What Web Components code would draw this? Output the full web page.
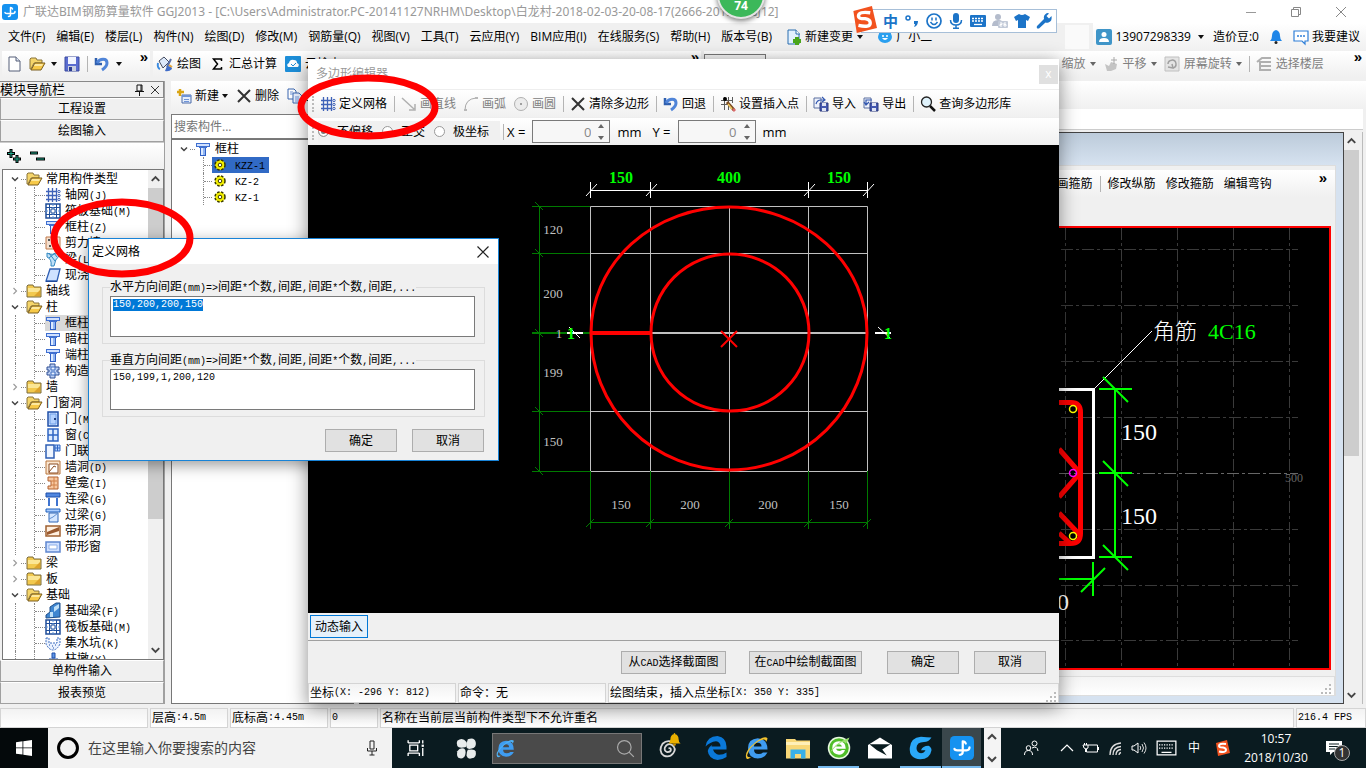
<!DOCTYPE html>
<html lang="zh-CN">
<head>
<meta charset="utf-8">
<title>广联达BIM钢筋算量软件 GGJ2013</title>
<style>
html,body{margin:0;height:100%}
body{position:relative;overflow:hidden;font:12px/16px "Open Sans","Noto Sans CJK SC",sans-serif;color:#000;background:#f0f0f0;display:flex;flex-direction:column}
main-window{flex:1;min-height:0}
</style>
</head>
<body>
<main-window></main-window>
<task-bar></task-bar>
<polygon-editor></polygon-editor>
<grid-dialog></grid-dialog>
<ime-bar></ime-bar>
<speed-ball>74</speed-ball>
<red-marks></red-marks>
<script>
const BASE = `*,:host{box-sizing:border-box}
button{font:inherit;color:inherit;background:none;border:0;padding:0;margin:0}
input,textarea,select{font:inherit;margin:0;border-radius:0;outline:0}
a{color:inherit;text-decoration:none}
.a{font-family:"Liberation Mono",monospace;font-size:10px;line-height:10px}
ui-icon{flex:none}
.sep{width:1px;height:16px;background:#b4b4b4;margin-right:-1px;flex:none}
.caret{width:0;height:0;border:3px solid transparent;border-top:4px solid #111;border-bottom:0;flex:none}
.more{font:bold 15px/10px "Liberation Sans",sans-serif}`;
/* wraps half-width runs so that they keep a 6px advance beside 12px ideographs */
const M = s => s.replace(/[\x20-\x7e]+/g, m => `<span class="a">${m.replace(/>/g,'&gt;').replace(/  +/g,x=>'&nbsp;'.repeat(x.length))}</span>`);
function define(name, css, html, setup){
  customElements.define(name, class extends HTMLElement{
    constructor(){
      super();
      const t = document.createElement('template');
      t.innerHTML = `<style>${BASE}${css}</style>` + (typeof html === 'function' ? '' : html);
      this.attachShadow({mode:'open'}).append(t.content.cloneNode(true));
    }
    connectedCallback(){
      if(this.ready) return;
      this.ready = true;
      if(typeof html === 'function'){
        const t = document.createElement('template');
        t.innerHTML = html(this);
        this.shadowRoot.append(t.content.cloneNode(true));
      }
      if(setup) setup(this);
    }
  });
}

const COLUMN = `<path d="M1 2h14v4h-3v1H4V6H1z" fill="#3f6fd0"/><path d="M2 3h12v2H2z" fill="#cfe0ff"/><path d="M5 7h6v8H5z" fill="#2f5fc4"/><path d="M6 7h2v7H6z" fill="#dceaff"/><path d="M8 7h2v7H8z" fill="#8fb4f2"/>`;
const RAFT = `<path d="M1 1h14v14H1z" fill="#fff" stroke="#1f4e9a" stroke-width="1.500"/><path d="M4.500 1v14M11.500 1v14M1 4.500h14M1 11.500h14" stroke="#1f4e9a"/><path d="M8 1v14M1 8h14" stroke="#5f93d8" stroke-dasharray="2 1"/><path d="M6 6h4v4H6z" fill="#fff" stroke="#1f4e9a"/>`;
const GRID = `<path d="M3.500 1v14M7.500 1v14M11.500 1v14M1 4.500h11M1 8.500h11M1 12.500h11" stroke="#3f62b8" stroke-width="1.300"/><circle cx="14" cy="4.500" r="1.200" fill="none" stroke="#3f62b8"/><circle cx="14" cy="8.500" r="1.200" fill="none" stroke="#3f62b8"/><circle cx="14" cy="12.500" r="1.200" fill="none" stroke="#3f62b8"/>`;
const FOLDER = `<path d="M1 3l1-1h5l1 2h7v10H1z" fill="#f2c94e" stroke="#7a6a3a"/><path d="M2 5h12v4H2z" fill="#fbe694"/><path d="M2 13h12V7L8 13z" fill="#dca22c"/>`;
const OPEN = `<path d="M1 3l1-1h5l1 2h5v3H5L2 13H1z" fill="#f5d56a" stroke="#8a743a"/><path d="M2 14l4-7h10l-4 7z" fill="#f7c948" stroke="#7a5f20"/><path d="M6 8h8l-1 2H5z" fill="#fde9a0"/>`;
const SAVE = `<path d="M1 1h14v14H1z" fill="#5a6cd0" stroke="#3a4a9f"/><path d="M4 1h8v7H4z" fill="#f2f5ff"/><path d="M4 10h8v5H4z" fill="#c9cfdf"/><path d="M5 11h3v4H5z" fill="#2b3c90"/>`;
const UNDO = `<path d="M2 2v6h6" fill="none" stroke="#2f5fae" stroke-width="2.500"/><path d="M3 7c3-5 10-5 10 0 0 3-2 5-5 7" fill="none" stroke="#4f84d8" stroke-width="3"/>`;
const CROSS = `<path d="M2 2l12 12M14 2L2 14" stroke="#333" stroke-width="2"/>`;
const TILE = `<rect width="16" height="16" rx="3" fill="#1592f0"/><path d="M8.500 3.500v7q0 2-2 2M3 8.500q0 1 2 1h6q2 0 2-2M10.500 5q-.500-1.500-2-1.500" fill="none" stroke="#fff" stroke-width="1.500" stroke-linecap="round"/>`;
const SOGOU = `<path d="M2 3l11-3 3 13-12 3z" fill="#f2521e"/><path d="M12 4Q5 3 5 6q0 1.500 4 1.500 3 .500 3 2.500 0 3-7 1.500" fill="none" stroke="#fff" stroke-width="2"/>`;
const DISK = `<path d="M1 2h7v10H1z" fill="#eef2fb" stroke="#5b6f9f"/><path d="M7 7h8v8H7z" fill="#4458b0" stroke="#2a397c"/><path d="M9 7h4v3H9zM9 12h4v3H9z" fill="#dfe4f3"/>`;
const ICONS = {
 column:COLUMN, raft:RAFT, grid:GRID, folder:FOLDER, open:OPEN, save:SAVE, undo:UNDO, cross:CROSS, app:TILE, sogou:SOGOU,
 page:`<path d="M3 1h7l4 4v10H3z" fill="#fff" stroke="#555f78"/><path d="M10 1v4h4" fill="#dfe6f2" stroke="#555f78"/>`,
 paint:`<path d="M2 5l5-4 5 5-6 6z" fill="#dce8fa" stroke="#444b60"/><path d="M1 7q-1 5 2 6" stroke="#3b8be0" stroke-width="2" fill="none"/><path d="M14 3l-4 8" stroke="#5a6fa8" stroke-width="2"/><path d="M10 10q5 0 5 3-3 3-7 2z" fill="#3f6cc8"/><path d="M12 9l3 2" stroke="#e8a83a" stroke-width="2"/>`,
 sum:`<path d="M12.500 5V3H4.500l4 5-4 5h8v-2" fill="none" stroke="#000" stroke-width="1.500"/>`,
 cloud:`<rect width="16" height="16" rx="1" fill="#1d8ed8"/><path d="M3 11q-2-3 1-4 1-4 5-3 3 0 3 3 3 1 1 4z" fill="#fff"/><path d="M6 8l2 2 3-3" fill="none" stroke="#1d8ed8"/>`,
 newitem:`<path d="M4 1v7M1 4h7" stroke="#d9a514" stroke-width="2.500"/><path d="M6 7h9v8H6z" fill="#e5eefc" stroke="#4b6aa8"/><path d="M6 7h9v2H6z" fill="#6f94d8"/><path d="M8 11.500h5M8 13.500h5" stroke="#6f94d8"/>`,
 copy:`<path d="M1 1h6l2 2v8H1z" fill="#fff" stroke="#3a66b0"/><path d="M6 5h6l3 3v7H6z" fill="#e8f0ff" stroke="#3a66b0"/><path d="M8 9h4M8 11h5M8 13h5M3 4h3M3 6h3" stroke="#6f94d8"/>`,
 change:`<path d="M2 1h8l3 3v11H2z" fill="#e2f1ff" stroke="#2a6fb0"/><path d="M10 1v4h4" fill="#fff" stroke="#2a6fb0"/><path d="M11 8v8M7 12h8" stroke="#4aa61c" stroke-width="4"/>`,
 bear:`<circle cx="4" cy="4" r="2" fill="#1f94e8"/><circle cx="12" cy="4" r="2" fill="#1f94e8"/><ellipse cx="8" cy="8" rx="7" ry="6" fill="#2aa0f0"/><circle cx="6" cy="7" r="1" fill="#fff"/><circle cx="10" cy="7" r="1" fill="#fff"/><path d="M5 9q3 4 6 0z" fill="#fff"/>`,
 user:`<rect width="16" height="16" rx="2" fill="#3f95c8"/><circle cx="8" cy="5.500" r="2.500" fill="#fff"/><path d="M3 13q0-4 5-4t5 4z" fill="#fff"/>`,
 bell:`<path d="M8 1q4 1 4 6 0 3 2 5H2q2-2 2-5 0-5 4-6z" fill="#1f86e8"/><circle cx="8" cy="13.500" r="1.500" fill="#222"/>`,
 chat:`<path d="M1 2h14v10h-3v3l-3-3H1z" fill="#fff" stroke="#2f7fd8" stroke-width="1.200"/><path d="M4 7h2M7 7h2M10 7h2" stroke="#2f7fd8" stroke-width="1.500"/>`,
 hand:`<path d="M2 8l4 2 2-4 6 2-1 5-5 2H4z" fill="#c4c4c4"/><path d="M11 1v7M8 4h6" stroke="#a8a8a8"/>`,
 rotate:`<path d="M1 1h14v14H1z" fill="#e4e4e4" stroke="#c0c0c0"/><path d="M4 8a4 4 0 1 1 5 4M4 11l5 1-1-4" fill="none" stroke="#a0a0a0" stroke-width="1.500"/>`,
 floors:`<path d="M1 6l5-4h9M3 6h12M4 10h11M4 14h11M4 6v9" fill="none" stroke="#b0b0b0" stroke-width="2"/>`,
 line:`<path d="M1 2l12 11M14 8v6H8" fill="none" stroke="#b0b0b0" stroke-width="1.500"/>`,
 arc:`<path d="M2 14Q2 3 13 2" fill="none" stroke="#a8a8a8"/><path d="M1 13h3v2H1zM12 1h3v2h-3z" fill="#b8b8b8"/>`,
 circle:`<circle cx="8" cy="8" r="6.500" fill="#ececec" stroke="#b0b0b0"/><path d="M7 7h2v2H7z" fill="#a0a0a0"/>`,
 insert:`<path d="M4.500 1v13M8.500 1v13M1 4.500h12M1 8.500h8M12.500 1v6" stroke="#5c5c5c"/><circle cx="5" cy="3" r="2" fill="#000"/><path d="M7 6l7 8" stroke="#7a4a20" stroke-width="3"/><path d="M8 8l4 5" stroke="#f0c860" stroke-width="1.500"/><path d="M13 13l2 2" stroke="#d86a6a" stroke-width="3"/>`,
 imp:DISK+`<path d="M3 8q1-4 5-4h3M9 1l3 3-3 2" fill="none" stroke="#3358b0" stroke-width="1.200"/>`,
 exp:DISK+`<path d="M9 4H3v5M1 6l2 3 3-3" fill="none" stroke="#3358b0" stroke-width="1.200"/>`,
 find:`<circle cx="6.500" cy="6" r="5" fill="#dff2fb" stroke="#222" stroke-width="1.300"/><path d="M10 10l5 5" stroke="#111" stroke-width="2.500"/>`,
 wall:`<path d="M1 2h14v12H1z" fill="#f4e0d0" stroke="#c07848"/><path d="M3 4h2v2H3zM7 8h2v2H7zM4 10h2v2H4zM10 4h2v2h-2z" fill="#555"/>`,
 beam:`<path d="M2 2q5 3 12-1v4q-4 3-5 10H6Q7 8 2 6z" fill="#bfe0f8" stroke="#2f86c0"/><path d="M4 2l6 8M9 2l3 4M4 7l6-5" stroke="#2f86c0"/>`,
 slab:`<path d="M5 2h10l-3 12H1z" fill="#cfe2ff" stroke="#2f5fb4" stroke-width="1.300"/><path d="M1 14h11v1H1z" fill="#1f4a9a"/>`,
 cols:`<path d="M5 1h5v3h4v3h-2v2h2v3h-4v3H5v-3H2V9h2V7H2V4h3z" fill="#bcd0f4" stroke="#2f4f94"/><path d="M6 4h4v3H6zM6 9h4v3H6z" fill="#eaf1ff" stroke="#3f6fc0"/>`,
 door:`<path d="M3 1h10v14H3z" fill="#cfe2ff" stroke="#1f4fa8" stroke-width="1.500"/><path d="M5 3h6v10H5z" fill="#b4d2ff" stroke="#6f9fe8"/><path d="M9 7h2v2H9z" fill="#1f3f80"/>`,
 window:`<path d="M3 2h10v12H3z" fill="#dcebff" stroke="#2f66c4" stroke-width="1.500"/><path d="M8 2v12M3 8h10" stroke="#2f66c4" stroke-width="1.500"/>`,
 doorwin:`<path d="M1 2h8v13H1z" fill="#eef5ff" stroke="#2f5fb4" stroke-width="1.500"/><path d="M10 2h5v6h-5zM12.500 2v6M10 5h5" fill="#b8d4ff" stroke="#2f66c4"/>`,
 hole:`<path d="M1 2h14v13H1z" fill="#fbe6d0" stroke="#b8743a"/><path d="M4 5h9v9H4z" fill="#fff" stroke="#8a4a20"/><path d="M4 13l5-6 2 1" stroke="#8a4a20" fill="none"/>`,
 niche:`<path d="M3 2h10v12H3v-3h3V6H3z" fill="#f8c8a0" stroke="#b06030"/><path d="M6 6h6M6 10h6M9 2v12" stroke="#d08048"/>`,
 lintel:`<path d="M1 2h14v4H1z" fill="#4f86e0" stroke="#1f4fa8"/><path d="M3 7h2v8H3zM11 7h2v8h-2z" fill="#3f74d0"/>`,
 ring:`<path d="M1 2h14v3H1z" fill="#a8ccff" stroke="#1f5fb8"/><path d="M4 6h9v9H4z" fill="#d4e6ff" stroke="#2f66b8"/><path d="M4 12l4-2 5-4" stroke="#5f8fd0" fill="none"/>`,
 strip:`<path d="M1 3h14v10H1z" fill="#fff0e0" stroke="#a06030" stroke-width="1.500"/><path d="M2 9l12-5v4L2 12z" fill="#9a5a30"/>`,
 stripw:`<path d="M1 3h14v10H1z" fill="#cfe0ff" stroke="#5f86d0" stroke-width="1.500"/><path d="M4 6h8v4H4z" fill="#fff" stroke="#8fb0e8"/>`,
 fbeam:`<path d="M1 15v-3l4-3V4l6-4h4v14z" fill="#3f86d0" stroke="#1f4f8a"/><path d="M5 9h3v5H5zM9 4l5-3v4L9 9z" fill="#bfe0f8"/>`,
 pit:`<path d="M1 3h3v5h8V3h3v6q-3 6-7 6T1 9z" fill="#eaf2ff" stroke="#3f6fc0" stroke-dasharray="2 1"/><path d="M4 10h1M7 11h1M10 10h1M8 13h1" stroke="#1f4fa8"/>`,
 pier:`<path d="M7 2h3v5H7zM4 8h9v7H4z" fill="#5f96e8" stroke="#1f4fa8"/>`,
 gear:`<circle cx="8" cy="8" r="5" fill="#f4f000" stroke="#3a3a00" stroke-width="1.500" stroke-dasharray="2.500 1.500"/><circle cx="8" cy="8" r="1.800" fill="#fff" stroke="#3a3a00"/>`,
 plus:`<path d="M5 1v9M1 5.500h8M11 7v8M7 11h8" stroke="#000" stroke-width="3"/><path d="M5 2v7M2 5.500h6M11 8v6M8 11h6" stroke="#1fa88a"/>`,
 minus:`<path d="M1 5h8M7 11h9" stroke="#000" stroke-width="3"/><path d="M2 5h6M8 11h7" stroke="#1fa88a"/>`,
 up:`<path d="M4 10l4-4 4 4" fill="none" stroke="#444" stroke-width="2"/>`,
 down:`<path d="M4 6l4 4 4-4" fill="none" stroke="#444" stroke-width="2"/>`,
 right:`<path d="M6 4l4 4-4 4" fill="none" stroke="#999" stroke-width="1.500"/>`,
 pin:`<path d="M6 3h5v6H6zM4 9.500h9M8.500 9v5M10 3v6" fill="none" stroke="#111"/>`,
 xs:`<path d="M4 4l8 8M12 4l-8 8" stroke="#333"/>`,
 xl:`<path d="M2.500 2.500l11 11M13.500 2.500l-11 11" stroke="#222" stroke-width="1.200"/>`,
 min:`<path d="M3 8.500h10" stroke="#999"/>`,
 restore:`<path d="M3.500 5.500h7v7h-7zM5.500 5V3.500h7v7H11" fill="none" stroke="#888"/>`,
 close:`<path d="M3 3l10 10M13 3L3 13" stroke="#888"/>`,
 grip:`<path d="M11 5h2v2h-2zM11 9h2v2h-2zM11 13h2v2h-2zM7 9h2v2H7zM7 13h2v2H7zM3 13h2v2H3z" fill="#bbb"/>`,
 win:`<path d="M0 2.200l6.500-.900V7.500H0zM7.300 1.200L16 0v7.500H7.300zM0 8.300h6.500v6.200L0 13.700zM7.300 8.300H16V16l-8.700-1.200z" fill="#fff"/>`,
 cortana:`<circle cx="8" cy="8" r="6.300" fill="none" stroke="#000" stroke-width="2"/>`,
 mic:`<path d="M6 1h4v8H6zM3.500 8v3h9V8M8 11v4M5.500 15h5" fill="none" stroke="#222"/>`,
 task:`<path d="M1 3.500h10M1 12.500h10M2.500 5.500h7v5h-7zM1 1v2.500M11 1v2.500M1 15v-2.500M11 15v-2.500M14 1v3M14 8v7" fill="none" stroke="#fff" stroke-width="1.200"/><path d="M13 5h2v2h-2z" fill="#fff"/>`,
 swirl:`<g fill="#e8ecec"><path d="M1 2q4-3 7 1 1 3-1 4-5 1-6-1t0-4z"/><path d="M9 1q5-2 6 2 1 4-3 5-3 1-4-1 0-4 1-6z"/><path d="M1 10q2-3 5-2 2 1 1 5-1 3-4 2.500T1 10z"/><path d="M9 9q5-1 6 1 1 5-3 5.500-3 1-4-2 0-3 1-4.500z"/></g>`,
 edge:`<path d="M1 7q1-7 8-7 6 1 6 7v2H6q1 3 4 3.500 3 0 5-1.500v3q-3 2-6 2-6-1-6.500-6 .500-3 4-4.500Q5 6 5 7h6q0-3-3-3.500Q4 4 1 7z" fill="#0a78d8"/>`,
 ie:`<path d="M2 8q0-6 6.500-6.500Q15 2 15 9H6q0 3 3 3 2 0 3-1h3q-2 4-6.500 4Q2 14.500 2 8zm4-1h5q0-2.500-2.500-2.500T6 7z" fill="#3f9cf0"/><path d="M1 15q-2-4 5-10Q13-1 15 1.500q0 1-1 2.500 0-3-5-.500-6 4-7.500 9-.500 2 2.500 1.500-2 2-3 1z" fill="#f2c230"/>`,
 ieb:`<path d="M2 8q0-6 6.500-6.500Q15 2 15 9H6q0 3 3 3 2 0 3-1h3q-2 4-6.500 4Q2 14.500 2 8zm4-1h5q0-2.500-2.500-2.500T6 7z" fill="#3f9cf0"/><path d="M1 15q-2-4 5-10Q13-1 15 1.500q0 1-1 2.500 0-3-5-.500-6 4-7.500 9-.500 2 2.500 1.500-2 2-3 1z" fill="#4fb4f8"/>`,
 ieg:`<circle cx="8" cy="8" r="7.500" fill="#e8f8e0"/><circle cx="8" cy="8" r="6.500" fill="#4fbe28"/><path d="M3.500 8q0-4.500 4.500-4.500t4.500 5h-6.500q.500 1.500 2.200 1.500 1 0 1.800-.700H12Q11 12.500 8 12.500 3.500 12 3.500 8zM6 7h4q-.500-1.500-2-1.500T6 7z" fill="#fff"/><path d="M1 13Q4 5 15 1q-1 3-3 4 0-2-3-.500Q4 8 1 13z" fill="#9be070"/>`,
 explorer:`<path d="M0 2h6l1 1h9v12H0z" fill="#f8d878"/><path d="M0 4h16v2H0z" fill="#fff0b8"/><path d="M3 9h10v6h-3v-3H6v3H3z" fill="#38b0e8"/>`,
 mail:`<path d="M0 6l8-5 8 5v9H0z" fill="#fff"/><path d="M1 5.500h14L9.500 9l3 4L6 9.500z" fill="#0a1c20"/>`,
 g:`<path d="M15 1Q13 4 10 4 5 4 5 8q0 3 3 3.500 2 0 3-2H8q1-3 5-3 2 1 2 3-1 6-7.500 6Q0 15 .500 8 1 1 8 .500q4 .500 7 .500z" fill="#2aa8f8"/>`,
 spiral:`<path d="M8 8q2-1 2 1t-3 2Q4 10 5 7q2-4 6-2 4 3 1 7-3 4-8 2-5-4-1-10 3-3 7-2" fill="none" stroke="#d8d8d8" stroke-width="1.500"/>`,
 alarm:`<path d="M8 0q1 0 1 1.500 4 1 4 6 0 4 2.500 5.500H.500Q3 11.500 3 7.500q0-5 4-6Q7 0 8 0z" fill="#eab000"/><path d="M6 13h4q0 3-2 3t-2-3z" fill="#c89000"/>`,
 search:`<circle cx="7" cy="7" r="5.700" fill="none" stroke="#aaa"/><path d="M11 11l4 4" stroke="#aaa"/>`,
 people:`<circle cx="11.500" cy="3.500" r="2.500" fill="none" stroke="#fff"/><circle cx="5.500" cy="8" r="2.300" fill="none" stroke="#fff"/><path d="M1.500 15q0-4.500 4-4.500t4 4.500M9 8q5.500-2.500 6 3" fill="none" stroke="#fff"/>`,
 upw:`<path d="M2 11l6-6 6 6" fill="none" stroke="#fff" stroke-width="1.200"/>`,
 battery:`<path d="M5 5h9.500v7H3.500V9M15.500 7v3" fill="none" stroke="#fff"/><path d="M0 5h5v3q-2 2-4 0zM1.500 3v2M3.500 3v2M2.500 9v3" stroke="#fff" fill="none"/>`,
 wifi:`<path d="M3 15Q3 4 14 3M6 15Q6 7 14 6.500M9 15q0-5 5-5.500M12 15q0-2 2-2.500" fill="none" stroke="#ddd" stroke-width="1.300"/>`,
 speaker:`<path d="M1 6h2l4-3v10L3 10H1z" fill="none" stroke="#fff"/><path d="M9 6q1.500 2 0 4M11 4q3 4 0 8M13 2.500q4 5.500 0 11" fill="none" stroke="#ddd"/>`,
 osk:`<path d="M.500 2.500h15v11H.500z" fill="none" stroke="#fff"/><path d="M2 5.500h12M2 8h12" stroke="#fff" stroke-dasharray="1 1"/><path d="M4 11.500h8" stroke="#fff"/>`,
 notes:`<path d="M0 1h16v11H7l-3 3v-3H0z" fill="#fff"/><path d="M3 4h10M3 6.500h10M3 9h6" stroke="#0a1c20"/>`,
 comma:`<circle cx="4" cy="5" r="2" fill="none" stroke="#1c74c8" stroke-width="1.500"/><path d="M10 8h4q0 5-4 6 1-2 1-3h-1z" fill="#1c74c8"/>`,
 smile:`<circle cx="8" cy="8" r="7" fill="none" stroke="#1c74c8" stroke-width="1.700"/><path d="M6 4.500v3M10 4.500v3M4.500 9q3.500 5 7 0" fill="none" stroke="#1c74c8" stroke-width="1.500"/>`,
 micb:`<rect x="5" y="0" width="6" height="10" rx="3" fill="#1c74c8"/><path d="M2.500 7q0 5 5.500 5t5.500-5M8 12v3M5 15.200h6" fill="none" stroke="#1c74c8" stroke-width="1.500"/>`,
 kb:`<rect y="2" width="16" height="12" rx="1" fill="#1c74c8"/><path d="M2 5.500h12M2 8h12" stroke="#fff" stroke-width="1.300" stroke-dasharray="2 1"/><path d="M4 11.500h8" stroke="#fff" stroke-width="1.300"/>`,
 person:`<circle cx="6" cy="4" r="3" fill="#b4bccc"/><path d="M0 13q0-6 6-6 3 0 4 1v5z" fill="#b4bccc"/><rect x="6" y="8" width="10" height="7" rx="1" fill="#c2cad8"/><path d="M8 10h2v1.500H8V13h2M14 10h-2v3h2v-1.500h-2" fill="none" stroke="#fff"/>`,
 shirt:`<path d="M5 1q3 2 6 0l5 3-2 4-2-1v8H4V7L2 8 0 4z" fill="#1c74c8"/>`,
 wrench:`<path d="M1 13l7-7q-1-4 3-6 2 0 2 .500L10.500 3 13 5.500 15.500 3q1 5-3 6.500-2 .500-3 0L3 15.500q-3 .500-2-2.500z" fill="#1c74c8"/>`
};
define('ui-icon', `:host{display:block;width:16px;height:16px}svg{display:block;width:100%;height:100%;overflow:visible}`,
  e => `<svg viewBox="0 0 16 16" aria-hidden="true">${ICONS[e.getAttribute('name')]||''}</svg>`);
define('tool-item', `:host{display:block;flex:none}button{display:flex;align-items:center;gap:var(--icon-gap,3px);white-space:nowrap;height:20px}:host([disabled]) button{color:#808080}:host([disabled]) .caret{border-top-color:#666}.caret{margin-left:var(--caret-gap,0)}`,
  e => `<button ${e.hasAttribute('disabled')?'disabled':''}>${e.hasAttribute('icon')?`<ui-icon name="${e.getAttribute('icon')}"></ui-icon>`:''}<slot></slot>${e.hasAttribute('caret')?'<span class="caret"></span>':''}</button>`);
define('push-button', `:host{display:block;flex:none}button{width:100%;height:23px;border:1px solid #adadad;background:#e1e1e1;white-space:nowrap}:host([hot]) button{border-color:#0078d7;background:#e5f1fb}`, `<button><slot></slot></button>`);
define('status-cell', `:host{display:flex;align-items:center;border:1px solid #d4d4d4;background:linear-gradient(#f2f2f2,#fff);height:20px;padding:0 1px;white-space:nowrap;overflow:hidden;flex:none}`, `<slot></slot>`);
define('scroll-bar', `:host{display:flex;flex-direction:column;background:#f0f0f0;width:15px;flex:none}.t{flex:1;display:flex;flex-direction:column}.h{background:#cdcdcd;height:var(--thumb,60%)}ui-icon{width:15px;height:18px}`,
 `<ui-icon name="up"></ui-icon><div class="t"><div class="h"></div></div><ui-icon name="down"></ui-icon>`);

define('tree-row', `:host{display:flex;align-items:center;height:16px;flex:none;white-space:nowrap}
.c{width:12px;height:16px;margin-left:6px}.d{width:5px;border-top:1px dotted #888}
.v{width:19px;height:16px;border-left:1px dotted #888;margin-left:12px}
.h{width:11px;height:16px;border-left:1px dotted #888;display:flex;align-items:center}.h i{flex:1;border-top:1px dotted #888}
.l{margin-left:4px;padding-right:6px}
:host([sel]) .l,:host([sel]) .i{background:#d9d9d9}:host([sel]) .l{margin-left:0;padding-left:4px;flex:1}
:host([short]) .v{border:0;margin-left:0;width:31px}:host([short]) .h{width:9px}
:host([short]) .l{margin-left:0;padding:0 4px 0 7px}:host([active]) .l,:host([active]) .i{background:#316ac5}`,
 e => { const ic = `<ui-icon class="i" name="${e.getAttribute('icon')}"></ui-icon><span class="l"><slot></slot></span>`;
  return e.hasAttribute('root') ? `<ui-icon class="c" name="${e.getAttribute('root')==='open'?'down':'right'}"></ui-icon><span class="d"></span>${ic}`
   : `<span class="v"></span><span class="h"><i></i></span>${ic}`; });
const TREE = [['o','常用构件类型'],['grid','轴网(J)'],['raft','筏板基础(M)'],['column','框柱(Z)'],['wall','剪力墙(Q)'],['beam','梁(L)'],['slab','现浇板(B)'],['c','轴线'],['o','柱'],['column','框柱(Z)','sel'],['column','暗柱(Z)'],['column','端柱(Z)'],['cols','构造柱(Z)'],['c','墙'],['o','门窗洞'],['door','门(M)'],['window','窗(C)'],['doorwin','门联窗(A)'],['hole','墙洞(D)'],['niche','壁龛(I)'],['lintel','连梁(G)'],['ring','过梁(G)'],['strip','带形洞'],['stripw','带形窗'],['c','梁'],['c','板'],['o','基础'],['fbeam','基础梁(F)'],['raft','筏板基础(M)'],['pit','集水坑(K)'],['pier','柱墩(Y)']];
const row = ([k,t,s='']) => k==='o'||k==='c' ? `<tree-row root="${k==='o'?'open':'shut'}" icon="${k==='o'?'open':'folder'}">${M(t)}</tree-row>` : `<tree-row icon="${k}" ${s}>${M(t)}</tree-row>`;

define('nav-pane', `:host{display:flex;flex-direction:column;border-right:1px solid #a0a0a0;min-height:0}
header{height:17px;display:flex;align-items:center;border:1px solid #888;border-left:0;flex:none;overflow:hidden}header b{font-weight:400;font-size:13px;line-height:13px;flex:1;white-space:nowrap}
.big{height:22px;flex:none;background:#f0f0f0;border:1px solid #a0a0a0;border-top-color:#fff}
.tools{height:27px;display:flex;align-items:center;gap:7px;padding-left:6px;background:linear-gradient(#fff,#f0f0f0);flex:none;border-top:1px solid #ccc}
.box{flex:1;min-height:0;display:flex;background:#fff;border:1px solid #777;margin-left:2px;overflow:hidden}
.tree{flex:1;min-width:0;overflow:hidden;display:flex;flex-direction:column;padding-top:1px}`,
`<header><b>模块导航栏</b><ui-icon name="pin"></ui-icon><ui-icon name="xs"></ui-icon></header>
<button class="big">工程设置</button><button class="big">绘图输入</button>
<div class="tools"><ui-icon name="plus"></ui-icon><ui-icon name="minus"></ui-icon></div>
<div class="box"><div class="tree">${TREE.map(row).join('')}</div><scroll-bar style="--thumb:73%"></scroll-bar></div>
<button class="big">单构件输入</button><button class="big">报表预览</button>`);

define('part-list', `:host{display:flex;flex-direction:column;min-height:0;padding-left:1px}
.bar{display:flex;align-items:center;gap:8px;height:30px;padding-left:5px;background:linear-gradient(#fff,#f0f0f0);flex:none}
input{height:25px;width:100%;border:1px solid #7a7a7a;background:#fff;padding:0 2px;flex:none;margin:3px 0 0}input::placeholder{color:#757575}
.tree{flex:1;background:#fff;border:1px solid #777;padding-top:1px}`,
`<div class="bar"><tool-item icon="newitem" caret>新建</tool-item><tool-item icon="cross">删除</tool-item><tool-item icon="copy">复制</tool-item></div>
<input type="text" placeholder="搜索构件..." aria-label="搜索构件">
<div class="tree"><tree-row root="open" icon="column">${M('框柱')}</tree-row><tree-row short active icon="gear">${M('KZZ-1')}</tree-row><tree-row short icon="gear">${M('KZ-2')}</tree-row><tree-row short icon="gear">${M('KZ-1')}</tree-row></div>`);

const tick = (x,y) => `<path d="M${x-16} ${y}h33M${x-12} ${y-12}l25 25"/>`;
define('section-view', `:host{display:flex;justify-content:flex-end;background:#000;border:2px solid #f00;overflow:hidden}svg{width:300px;height:438px;flex:none;display:block}text{font-family:"Liberation Serif","Noto Sans CJK SC",serif}`,
`<svg viewBox="1029 228 300 438"><g stroke="#3a3a3a" stroke-dasharray="12 3 3 3">${[1065,1121,1177,1233,1289].map(x=>`<path d="M${x}.500 228V666"/>`).join('')}${[249,305,361,417,529,585,640].map(y=>`<path d="M1061 ${y}.500H1298"/>`).join('')}<path d="M1059 473.500H1298" stroke="#666"/></g>
<path d="M1095 388l57-57" stroke="#fff"/>
<path d="M1040 389.500h53.500v168H1040" fill="none" stroke="#fff" stroke-width="3"/>
<path d="M1040 402.500h31q9.500 0 9.500 10v121q0 10-10 10H1040M1059 449l21 24-21 24M1059 513l21 22M1059 533l12 11" fill="none" stroke="#f00" stroke-width="5"/>
<g fill="none" stroke-width="1.500"><circle cx="1073" cy="409" r="3.500" stroke="#ff0"/><circle cx="1073" cy="473" r="3.500" stroke="#f0f"/><circle cx="1073" cy="536" r="3.500" stroke="#ff0"/></g>
<g stroke="#0f0" stroke-width="2"><path d="M1115 389v168"/>${tick(1115,389)}${tick(1115,473)}${tick(1115,557)}<path d="M1059 579h34M1093 562v34M1081 592l24-24"/></g>
<g fill="#fff" font-size="24"><text x="1153" y="339" font-size="22" font-weight="300">角筋</text><text x="1121" y="440">150</text><text x="1121" y="524">150</text><text x="1057" y="610">0</text></g>
<text x="1208" y="339" font-size="22" fill="#0f0">4C16</text><text x="1285" y="482" font-size="12" fill="#666">500</text></svg>`);

define('mdi-area', `:host{display:flex;flex-direction:column;min-height:0;min-width:0}
.strip{height:28px;background:linear-gradient(#fff,#f0f0f0);flex:none}
.tabs{height:21px;background:#fff;border-bottom:1px solid #ccc;flex:none;margin-right:3px}
.area{flex:1;display:flex;margin:2px 3px 0 0;padding-right:3px;border-right:1px solid #bbb;min-height:0}
.win{flex:1;min-width:0;display:flex;flex-direction:column;border:1px solid #444;background:linear-gradient(#bccbda,#d6e2f0 32px);padding:32px 7px 7px}
.in{flex:1;min-height:0;display:flex;flex-direction:column;background:#f0f0f0;border:1px solid #ddd;border-bottom:0}
.bar{height:27px;margin-top:4px;display:flex;align-items:center;justify-content:flex-end;gap:10px;background:linear-gradient(#fff,#f0f0f0);padding-right:8px;flex:none}.bar .sep{margin:0 -3px}
.more{margin:-12px 0 0 37px}
section-view{flex:1;margin:29px 4px 6px 0;min-height:0}
.st{height:20px;flex:none;display:flex;justify-content:flex-end;align-items:flex-end;border:1px solid #ddd;background:linear-gradient(#f4f4f4,#fff)}`,
`<div class="strip"></div><div class="tabs"></div><div class="area"><div class="win"><div class="in"><div class="bar"><tool-item>画箍筋</tool-item><span class="sep"></span><tool-item>修改纵筋</tool-item><tool-item>修改箍筋</tool-item><tool-item>编辑弯钩</tool-item><span class="more">»</span></div><section-view></section-view><div class="st"><ui-icon name="grip"></ui-icon></div></div></div><scroll-bar style="--thumb:57%"></scroll-bar></div>`);

define('main-window', `:host{display:flex;flex-direction:column}
.title{height:23px;background:#fff;display:flex;align-items:center;padding:0 17px 0 2px;gap:5px;color:#999;flex:none;white-space:nowrap}.title span{flex:1;font-family:"Noto Sans","Noto Sans CJK SC",sans-serif}.title nav{display:flex;gap:29px}
.menu{height:28px;display:flex;align-items:center;flex:none;background:#f0f0f0;white-space:nowrap;--caret-gap:4px}
.menu nav{display:flex;gap:11px;padding-left:8px;flex:1;align-items:center;--caret-gap:1px}.menu nav tool-item{margin-left:3px}
.acct{display:flex;gap:9px;align-items:center;height:28px;padding:0 6px 0 3px;background:linear-gradient(#fff,#f0f0f0)}
.blank{width:24px;height:24px;background:#fafafa;margin-right:4px}
.tools{height:30px;display:flex;gap:3px;flex:none}
.tools>div{display:flex;align-items:center;background:linear-gradient(#fff,#f0f0f0);height:26px}
.one{width:148px;padding-left:4px;gap:7px;margin-left:2px;--caret-gap:3px}.one .more,.two .more{margin:-14px 0 0 auto;padding-right:2px}
.two{width:548px;padding-left:4px;gap:8px}.two tool-item,.three tool-item{--icon-gap:4px}.three{flex:1;gap:7px}.three select{width:62px;height:20px;border:1px solid #777;background:#f4f4f4;margin-right:auto;appearance:none}
.three .more{margin:-14px 4px 0 23px}
.body{flex:1;min-height:0;display:grid;grid-template-columns:165px 184px 1fr;gap:5px}.status{display:flex;gap:2px;height:24px;align-items:flex-end;flex:none}`,
`<div class="title"><ui-icon name="app"></ui-icon><span>广联达BIM钢筋算量软件 GGJ2013 - [C:\\Users\\Administrator.PC-20141127NRHM\\Desktop\\白龙村-2018-02-03-20-08-17(2666-2013).GGJ12]</span><nav><ui-icon name="min"></ui-icon><ui-icon name="restore"></ui-icon><ui-icon name="close"></ui-icon></nav></div>
<div class="menu"><nav>${['文件(F)','编辑(E)','楼层(L)','构件(N)','绘图(D)','修改(M)','钢筋量(Q)','视图(V)','工具(T)','云应用(Y)','BIM应用(I)','在线服务(S)','帮助(H)','版本号(B)'].map(t=>`<a href="#">${t}</a>`).join('')}<tool-item icon="change" caret>新建变更</tool-item><tool-item icon="bear">广小二</tool-item></nav><div class="blank"></div><div class="acct"><tool-item icon="user" caret>13907298339</tool-item><span>造价豆:0</span><ui-icon name="bell"></ui-icon><tool-item icon="chat">我要建议</tool-item></div></div>
<div class="tools"><div class="one"><ui-icon name="page"></ui-icon><tool-item icon="open" caret></tool-item><ui-icon name="save"></ui-icon><span class="sep"></span><tool-item icon="undo" caret></tool-item><span class="more">»</span></div>
<div class="two"><tool-item icon="paint">绘图</tool-item><tool-item icon="sum">汇总计算</tool-item><tool-item icon="cloud">云检查</tool-item><span class="more">»</span></div>
<div class="three"><select aria-label="楼层"></select><tool-item disabled caret>缩放</tool-item><tool-item disabled icon="hand" caret>平移</tool-item><tool-item disabled icon="rotate" caret>屏幕旋转</tool-item><span class="sep"></span><tool-item disabled icon="floors">选择楼层</tool-item><span class="more">»</span></div></div>
<div class="body"><nav-pane></nav-pane><part-list></part-list><mdi-area></mdi-area></div>
<div class="status"><status-cell style="width:148px"></status-cell><status-cell style="width:78px">${M('层高:4.5m')}</status-cell><status-cell style="width:98px">${M('底标高:4.45m')}</status-cell><status-cell style="width:48px">${M('0')}</status-cell><status-cell style="flex:1">名称在当前层当前构件类型下不允许重名</status-cell><status-cell style="width:70px">${M('216.4 FPS')}</status-cell></div>`);

define('polygon-canvas', `:host{display:block;background:#000;overflow:hidden}svg{display:block;width:100%;height:100%}text{font-family:"Liberation Serif",serif;text-anchor:middle}`,
`<svg viewBox="308 145 751 468"><g stroke="#c0c0c0" fill="none"><path d="M590.500 206.500h277v265h-277zM650.500 206v265M729.500 206v265M808.500 206v265M590 253.500h277M590 411.500h277"/><path d="M650 333h217" stroke-width="2"/></g>
<g stroke="#007a00"><path d="M539.500 206v265M590.500 471v58M650.500 471v58M729.500 471v58M808.500 471v58M867.500 471v58M590 522.500h277M532 206.500h58M532 253.500h58M532 411.500h58M532 471.500h58"/><path d="M532 333h58" stroke-width="2"/>${[206,253,333,411,471].map(y=>`<path d="M535 ${y-4}l8 8"/>`).join('')}${[590,650,729,808,867].map(x=>`<path d="M${x-4} 527l8-8"/>`).join('')}</g>
<g stroke="#fff"><path d="M590 190.500h277"/>${[590,650,808,867].map(x=>`<path d="M${x}.500 182v16M${x-4} 196l11-12"/>`).join('')}<path d="M569 327l11 11M878 327l12 11"/><path d="M567 333h16M875 333h16" stroke-width="2"/></g>
<g stroke="#f00" stroke-width="3" fill="none"><path d="M591 333A138 126 0 0 1 867 333A138 137 0 0 1 591 333zM651 333A79 79 0 0 1 809 333A79 78 0 0 1 651 333z"/><path d="M591 333h60" stroke-width="4"/><path d="M721 331l16 16M737 331l-16 16" stroke-width="2"/></g>
<g fill="#0f0" font-size="16" font-weight="700"><text x="621" y="183">150</text><text x="729" y="183">400</text><text x="839" y="183">150</text><text x="571" y="339">1</text><text x="888" y="339">1</text></g>
<g fill="#c0c0c0" font-size="13"><text x="553" y="234">120</text><text x="553" y="298">200</text><text x="559" y="338">1</text><text x="553" y="377">199</text><text x="553" y="446">150</text><text x="621" y="509">150</text><text x="690" y="509">200</text><text x="768" y="509">200</text><text x="839" y="509">150</text></g></svg>`);

define('spin-box', `:host{display:flex;width:78px;height:23px;border:1px solid #7a7a7a;background:#f7f7f7;align-items:center}input{width:58px;border:0;background:none;color:#888;text-align:right;padding:0}.s{display:flex;flex-direction:column;gap:8px;margin-left:7px}.s button{width:0;height:0;border:3px solid transparent;border-top:0;border-bottom:4px solid #666}.s button+button{border-bottom:0;border-top:4px solid #666}`,
 `<input type="text" value="0" aria-label="偏移"><span class="s"><button aria-label="增加"></button><button aria-label="减少"></button></span>`);

define('polygon-editor', `:host{position:absolute;left:308px;right:307px;top:59px;bottom:65px;display:flex;flex-direction:column;background:#f0f0f0;box-shadow:0 4px 18px rgba(0,0,0,.45)}
.title{height:30px;background:#fff;display:flex;align-items:center;justify-content:space-between;padding:0 1px 0 8px;color:#999;flex:none}.title button{width:19px;height:19px;background:#e0e0e0;color:#fff}
.bar{height:28px;display:flex;align-items:center;gap:7px;background:linear-gradient(#fff,#f0f0f0);flex:none;border-top:1px solid #eee;padding-left:4px;white-space:nowrap}
.dots{width:2px;height:16px;border-left:2px dotted #bbb;margin-right:-1px}
.modes{display:flex;align-items:center;background:#f0f0f0;margin-left:-2px;gap:9px;padding-right:11px;height:22px;margin-right:-4px}.modes label{display:flex;align-items:center;gap:8px}
input[type=radio]{appearance:none;width:11px;height:11px;border:1px solid #999;border-radius:50%;background:#fff}input:checked{box-shadow:inset 0 0 0 2px #fff;background:#777}
.xy{display:flex;align-items:center;gap:7px;font-size:13px;margin-left:-3px}.xy+.xy{margin-left:4px}
polygon-canvas{flex:1;min-height:0}
.dyn{height:28px;padding:2px;display:flex;border-bottom:1px solid #a0a0a0;flex:none}.dyn push-button{width:58px}
.acts{height:42px;display:flex;align-items:center;justify-content:flex-end;padding-right:13px;flex:none}
.st{display:flex;gap:2px;height:20px;flex:none;position:relative}.st status-cell:last-of-type{flex:1}.st ui-icon{position:absolute;right:0;bottom:0}`,
`<div class="title"><span>多边形编辑器</span><button aria-label="关闭">x</button></div>
<div class="bar"><span class="dots"></span><tool-item icon="grid">定义网格</tool-item><span class="sep"></span><tool-item disabled icon="line">画直线</tool-item><tool-item disabled icon="arc">画弧</tool-item><tool-item disabled icon="circle">画圆</tool-item><span class="sep"></span><tool-item icon="cross">清除多边形</tool-item><span class="sep"></span><tool-item icon="undo">回退</tool-item><span class="sep"></span><tool-item icon="insert">设置插入点</tool-item><span class="sep"></span><tool-item icon="imp">导入</tool-item><tool-item icon="exp">导出</tool-item><span class="sep"></span><tool-item icon="find">查询多边形库</tool-item></div>
<div class="bar"><span class="dots"></span><div class="modes"><label><input type="radio" name="m" checked>不偏移</label><label><input type="radio" name="m">正交</label><label><input type="radio" name="m">极坐标</label></div><span class="sep"></span><div class="xy"><span>X =</span><spin-box></spin-box><span>mm</span></div><div class="xy"><span>Y =</span><spin-box></spin-box><span>mm</span></div></div>
<polygon-canvas></polygon-canvas>
<div class="dyn"><push-button hot>动态输入</push-button></div>
<div class="acts"><push-button style="width:105px;margin-right:23px">${M('从CAD选择截面图')}</push-button><push-button style="width:113px;margin-right:25px">${M('在CAD中绘制截面图')}</push-button><push-button style="width:72px;margin-right:15px">确定</push-button><push-button style="width:72px">取消</push-button></div>
<div class="st"><status-cell style="width:148px">${M('坐标 (X: -296 Y: 812)')}</status-cell><status-cell style="width:148px">命令：无</status-cell><status-cell>${M('绘图结束，插入点坐标[X: 350 Y: 335]')}</status-cell><ui-icon name="grip"></ui-icon></div>`);

define('grid-dialog', `:host{position:absolute;left:88px;top:238px;width:411px;background:#f0f0f0;border:1px solid #1883d7;box-shadow:0 4px 14px rgba(0,0,0,.4)}
header{height:25px;background:#fff;display:flex;justify-content:space-between;align-items:center;padding:0 7px 0 3px}
form{padding:14px 13px 8px}
fieldset{margin:0 0 7px;border:1px solid #dcdcdc;padding:0 9px 6px 7px;min-width:0}
legend{padding:0;line-height:18px;white-space:nowrap;height:18px}textarea{display:block;width:100%;height:41px;border:1px solid #7a7a7a;background:#fff;resize:none;padding:2px;font:10px/12px "Liberation Mono",monospace;overflow:hidden}
textarea::selection{background:#0078d7;color:#fff}
.b{display:flex;justify-content:flex-end;gap:15px;padding:5px 1px 0 0}.b push-button{width:72px}`,
`<header><span>定义网格</span><ui-icon name="xl"></ui-icon></header>
<form><fieldset><legend><label for="h">${M('水平方向间距(mm)=>间距*个数,间距,间距*个数,间距,...')}</label></legend><textarea id="h">150,200,200,150</textarea></fieldset>
<fieldset><legend><label for="v">${M('垂直方向间距(mm)=>间距*个数,间距,间距*个数,间距,...')}</label></legend><textarea id="v">150,199,1,200,120</textarea></fieldset>
<div class="b"><push-button>确定</push-button><push-button>取消</push-button></div></form>`, e => e.shadowRoot.getElementById('h').select());

define('ime-bar', `:host{position:absolute;right:309px;top:9px;height:24px;display:flex;align-items:center;gap:6px;background:#fff;border:1px solid #a7bfd8;padding:0 4px 0 0;color:#1c74c8;font-weight:700;font-size:15px}.s{width:27px;height:27px;margin:-4px 0 0 -12px}`,
`<ui-icon class="s" name="sogou"></ui-icon><span>中</span>${['comma','smile','micb','kb','person','shirt','wrench'].map(n=>`<ui-icon name="${n}"></ui-icon>`).join('')}`);
define('speed-ball', `:host{position:absolute;left:717px;top:-29px;width:48px;height:48px;border-radius:50%;background:#3cb85a;border:2px solid #e4e4e4;box-shadow:0 2px 5px rgba(0,0,0,.5);color:#fff;font-weight:700;text-align:center;padding-top:25px}`, `<slot></slot>`);
define('red-marks', `:host{position:absolute;left:0;top:0;width:460px;height:300px;pointer-events:none}`,
`<svg width="460" height="300" fill="none" stroke="#f00"><ellipse cx="368" cy="107" rx="67" ry="29" stroke-width="7"/><ellipse cx="122" cy="238" rx="68" ry="36" stroke-width="7"/></svg>`);

define('task-bar', `:host{display:flex;height:40px;flex:none;background:#0a1b20;color:#fff;align-items:stretch}
.start{width:48px;background:#04090b;display:grid;place-items:center}
.find{width:344px;background:#f2f2f2;display:flex;align-items:center;padding:0 12px 0 8px;gap:8px;color:#333;font-size:14px}.find input{flex:1;border:0;background:none;min-width:0;padding:0;color:#333}.find input::placeholder{color:#444}.find .o{width:24px;height:24px}
.t{width:41px;display:grid;place-items:center;position:relative;flex:none}.t ui-icon{width:24px;height:24px}.run{border-bottom:2px solid #76b9ed;padding-top:2px}.on{background:#3a474c;width:39px;margin-left:1px}
.ie{width:150px;height:31px;background:#4a4a4a;border:1px solid #777;margin:5px 0 0 5px;display:flex;align-items:center;justify-content:space-between;padding:0 6px 0 3px}.ie ui-icon{width:19px;height:19px}
.bell{position:absolute!important;width:13px!important;height:15px!important;left:26px;top:4px}
.sc{width:17px;margin-left:3px;background:#f4f4f4;display:flex;flex-direction:column;justify-content:space-between;padding:1px 0}
.tray{margin-left:auto;display:flex;align-items:center;padding-right:8px}.tray ui-icon{width:16px;height:16px}
.clock{width:72px;text-align:center;line-height:19px;white-space:nowrap}.tray .nt{position:relative;width:46px;padding-left:14px}.nt b{position:absolute;left:22px;top:5px;width:16px;height:16px;border-radius:50%;background:#333;border:1px solid #aaa;font:12px/14px "Open Sans",sans-serif;text-align:center}`,
`<button class="start" aria-label="开始"><ui-icon name="win"></ui-icon></button>
<div class="find"><ui-icon class="o" name="cortana"></ui-icon><input type="text" placeholder="在这里输入你要搜索的内容" aria-label="搜索"><ui-icon name="mic"></ui-icon></div>
<span class="t" style="width:48px"><ui-icon name="task" style="width:18px;height:18px"></ui-icon></span><span class="t" style="width:47px;padding-left:6px"><ui-icon name="swirl" style="width:21px;height:21px"></ui-icon></span>
<div class="ie"><ui-icon name="ieb"></ui-icon><ui-icon name="search"></ui-icon></div>
<span class="t" style="width:53px"><ui-icon name="spiral" style="width:19px;height:19px"></ui-icon><ui-icon class="bell" name="alarm"></ui-icon></span>
${[['edge'],['ie'],['explorer'],['ieg','run'],['mail'],['g','run'],['app','run on']].map(([n,c=''])=>`<span class="t ${c}"><ui-icon name="${n}"></ui-icon></span>`).join('')}
<div class="sc"><ui-icon name="up"></ui-icon><ui-icon name="down"></ui-icon></div>
<div class="tray"><ui-icon name="people"></ui-icon><ui-icon name="upw" style="margin-left:20px"></ui-icon><ui-icon name="battery" style="margin-left:8px"></ui-icon><ui-icon name="wifi" style="margin-left:8px"></ui-icon><ui-icon name="speaker" style="margin-left:8px"></ui-icon><ui-icon name="osk" style="width:23px;height:20px;margin-left:8px"></ui-icon><span style="margin-left:10px">中</span><ui-icon name="sogou" style="margin:0 10px 0 14px"></ui-icon><div class="clock">10:57<br>2018/10/30</div><span class="nt"><ui-icon name="notes"></ui-icon><b>1</b></span></div>`);
</script>
</body>
</html>
